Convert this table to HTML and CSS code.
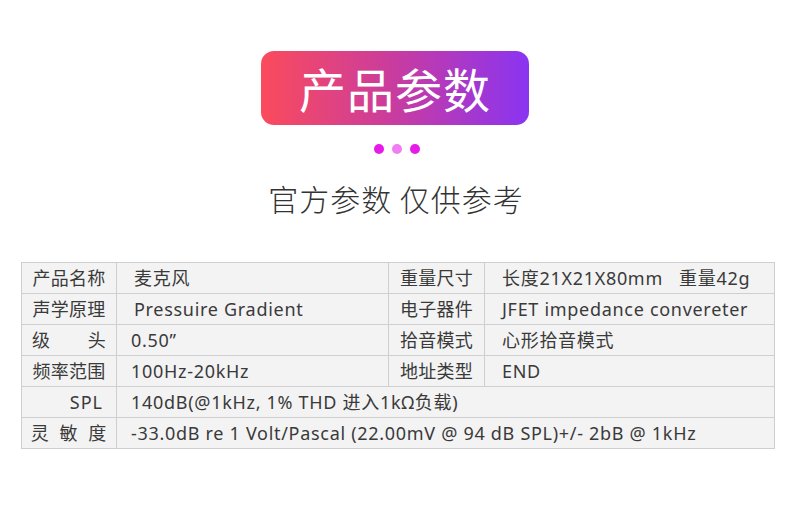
FILE: index.html
```html
<!DOCTYPE html>
<html>
<head>
<meta charset="utf-8">
<link rel="stylesheet" href="styles.css">
</head>
<body>
<div class="page">
  <div class="badge">产品参数</div>
  <div class="dots"><span class="dot"></span><span class="dot light"></span><span class="dot"></span></div>
  <div class="subtitle">官方参数 仅供参考</div>
  <table class="spec">
    <colgroup><col class="c1"><col class="c2"><col class="c3"><col class="c4"></colgroup>
    <tr><td class="lab">产品名称</td><td class="val">麦克风</td><td class="lab">重量尺寸</td><td class="val">长度21X21X80mm&nbsp;&nbsp; 重量42g</td></tr>
    <tr><td class="lab">声学原理</td><td class="val">Pressuire Gradient</td><td class="lab">电子器件</td><td class="val">JFET impedance convereter</td></tr>
    <tr><td class="lab just"><span>级</span><span>头</span></td><td class="val v2">0.50”</td><td class="lab">拾音模式</td><td class="val">心形拾音模式</td></tr>
    <tr><td class="lab">频率范围</td><td class="val v2">100Hz-20kHz</td><td class="lab">地址类型</td><td class="val">END</td></tr>
    <tr><td class="lab right">SPL</td><td class="val v2" colspan="3">140dB(@1kHz, 1% THD 进入1kΩ负载)</td></tr>
    <tr><td class="lab spaced">灵 敏 度</td><td class="val v2" colspan="3">-33.0dB re 1 Volt/Pascal (22.00mV @ 94 dB SPL)+/- 2bB @ 1kHz</td></tr>
  </table>
</div>
</body>
</html>
```
FILE: styles.css
```css
html, body {
  margin: 0;
  padding: 0;
  background: #fff;
}
body {
  font-family: "Noto Sans CJK SC", "Noto Sans", sans-serif;
  color: #333;
}
.page {
  width: 790px;
  height: 514px;
  display: flex;
  flex-direction: column;
  align-items: center;
  padding-top: 51px;
  box-sizing: border-box;
}
.badge {
  width: 268px;
  height: 74px;
  border-radius: 13px;
  background: linear-gradient(90deg, #fb4b5c 0%, #c83ca0 50%, #8a34f2 100%);
  color: #fff;
  font-size: 47px;
  line-height: 74px;
  text-align: center;
  letter-spacing: 1px;
  font-weight: 400;
}
.dots {
  display: flex;
  gap: 8px;
  margin-top: 19px;
  margin-left: 4px;
}
.dot {
  width: 10px;
  height: 10px;
  border-radius: 50%;
  background: #e61be8;
}
.dot.light {
  background: #f07ef2;
}
.subtitle {
  margin-top: 22px;
  font-size: 30px;
  line-height: 44px;
  font-weight: 300;
  color: #333;
  letter-spacing: 1px;
  margin-left: 2px;
}
.spec {
  margin-top: 42px;
  border-collapse: collapse;
  table-layout: fixed;
  width: 754px;
  margin-left: 6px;
  background: #f3f3f3;
  font-family: "Noto Sans", "Noto Sans CJK SC", sans-serif;
  font-size: 18px;
  letter-spacing: 0.7px;
  color: #3a3a3a;
}
.c1 { width: 95px; }
.c2 { width: 272px; }
.c3 { width: 96px; }
.c4 { width: 290px; }
.spec td {
  border: 1px solid #cfcfcf;
  height: 30px;
  padding: 0;
  line-height: 30px;
  white-space: nowrap;
  overflow: visible;
}
.spec td.lab {
  text-align: center;
  letter-spacing: 0.3px;
}
.spec td.val {
  padding-left: 17px;
}
.spec td.val.v2 {
  padding-left: 14px;
}
.spec td.just {
  padding: 0 10px 0 10px;
}
.spec td.just span:first-child {
  float: left;
}
.spec td.just span:last-child {
  float: right;
}
.spec td.right {
  text-align: right;
  padding-right: 13px;
  letter-spacing: 1px;
}
.spec td.spaced {
  word-spacing: 4px;
  letter-spacing: 1px;
}
```
